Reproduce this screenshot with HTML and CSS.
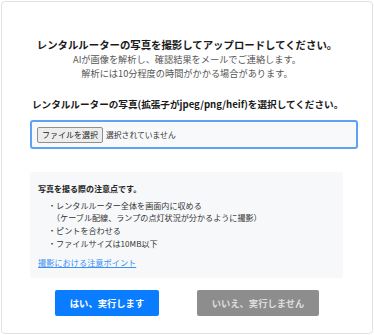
FILE: index.html
```html
<!DOCTYPE html>
<html lang="ja">
<head>
<meta charset="utf-8">
<link rel="stylesheet" href="styles.css">
</head>
<body>
<div class="card">
  <div class="intro">
    <p class="title">レンタルルーターの写真を撮影してアップロードしてください。</p>
    <p class="sub">AIが画像を解析し、確認結果をメールでご連絡します。</p>
    <p class="sub">解析には10分程度の時間がかかる場合があります。</p>
  </div>
  <p class="heading">レンタルルーターの写真(拡張子がjpeg/png/heif)を選択してください。</p>
  <div class="file-box">
    <button class="file-btn" type="button">ファイルを選択</button>
    <span class="file-none">選択されていません</span>
  </div>
  <div class="notes">
    <p class="notes-title">写真を撮る際の注意点です。</p>
    <ul class="notes-list">
      <li>・レンタルルーター全体を画面内に収める<br><span class="sub-line">（ケーブル配線、ランプの点灯状況が分かるように撮影）</span></li>
      <li>・ピントを合わせる</li>
      <li>・ファイルサイズは10MB以下</li>
    </ul>
    <a class="notes-link" href="#">撮影における注意ポイント</a>
  </div>
  <div class="actions">
    <button class="btn btn-yes" type="button">はい、実行します</button>
    <button class="btn btn-no" type="button">いいえ、実行しません</button>
  </div>
</div>
</body>
</html>
```
FILE: styles.css
```css
html, body {
  margin: 0;
  padding: 0;
  background: #ffffff;
}
body {
  font-family: "Noto Sans CJK JP", "Noto Sans", sans-serif;
  color: #222;
}
p { margin: 0; }
.card {
  box-sizing: border-box;
  margin: 1px;
  width: 372px;
  height: 333px;
  border: 1px solid #e2e2e2;
  border-radius: 4px;
  padding: 36px 0 0 28px;
}
.intro {
  width: 314px;
  text-align: center;
}
.title {
  font-size: 10.4px;
  font-weight: bold;
  line-height: 14px;
  color: #1a1a1a;
}
.sub {
  font-size: 9.2px;
  line-height: 14px;
  color: #555;
}
.heading {
  margin-top: 17px;
  margin-left: 2px;
  font-size: 9.6px;
  font-weight: bold;
  line-height: 14px;
  color: #1a1a1a;
  white-space: nowrap;
}
.file-box {
  box-sizing: border-box;
  margin-top: 9px;
  width: 328px;
  height: 29px;
  border: 2px solid #5fa1f2;
  border-radius: 3px;
  background: #f8f9fb;
  display: flex;
  align-items: center;
  padding-left: 5px;
  gap: 3px;
}
.file-btn {
  font-family: inherit;
  font-size: 8px;
  height: 16px;
  padding: 0 4px;
  border: 1px solid #8f8f8f;
  border-radius: 2px;
  background: #ededed;
  color: #222;
  line-height: 14px;
}
.file-none {
  font-size: 7.8px;
  color: #333;
}
.notes {
  box-sizing: border-box;
  margin-top: 23px;
  width: 313px;
  height: 106px;
  background: #f7f8fa;
  border-radius: 3px;
  padding: 11px 0 0 8px;
}
.notes-title {
  font-size: 8px;
  font-weight: bold;
  line-height: 12px;
  color: #222;
}
.notes-list {
  list-style: none;
  margin: 5px 0 0 0;
  padding: 0 0 0 10px;
  font-size: 8.1px;
  line-height: 12px;
  color: #333;
}
.notes-list li { margin-bottom: 1px; }
.sub-line { margin-left: 4px; }
.notes-link {
  display: block;
  width: fit-content;
  margin-top: 6px;
  font-size: 8.2px;
  line-height: 12px;
  color: #3d8ff2;
  text-decoration: underline;
}
.actions {
  display: flex;
  justify-content: center;
  gap: 38px;
  margin-top: 12px;
  margin-left: -28px;
}
.btn {
  font-family: inherit;
  font-size: 9.3px;
  font-weight: bold;
  height: 26px;
  border: none;
  border-radius: 2px;
  color: #fff;
}
.btn-yes {
  width: 104px;
  background: #0a7cff;
}
.btn-no {
  width: 122px;
  background: #8d8d8d;
  color: #dedede;
}
```
